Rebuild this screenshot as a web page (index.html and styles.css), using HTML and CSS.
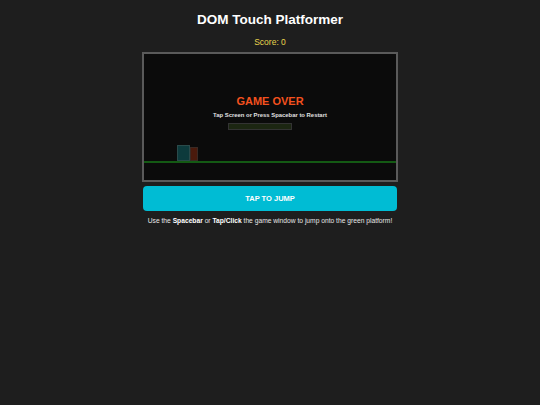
FILE: index.html
```html
<!DOCTYPE html>
<html>
<head>
<meta charset="utf-8">
<link rel="stylesheet" href="styles.css">
</head>
<body>
<div class="app">
  <h1 class="title">DOM Touch Platformer</h1>
  <div class="score">Score: 0</div>
  <div class="game">
    <div class="ground"></div>
    <div class="player"></div>
    <div class="obstacle"></div>
    <div class="overlay">
      <div class="over">GAME OVER</div>
      <div class="restart">Tap Screen or Press Spacebar to Restart</div>
      <div class="bar"></div>
    </div>
  </div>
  <button class="jump">TAP TO JUMP</button>
  <p class="help">Use the <b>Spacebar</b> or <b>Tap/Click</b> the game window to jump onto the green platform!</p>
</div>
</body>
</html>
```
FILE: styles.css
```css
html, body {
  margin: 0;
  padding: 0;
  background: #1e1e1e;
  font-family: "Liberation Sans", Arial, sans-serif;
}
.app {
  width: 256px;
  margin: 0 auto;
  padding-top: 12px;
  display: flex;
  flex-direction: column;
  align-items: center;
}
.title {
  margin: 0;
  font-size: 13.5px;
  line-height: 16px;
  font-weight: bold;
  color: #ffffff;
}
.score {
  margin-top: 9px;
  font-size: 8.5px;
  line-height: 11px;
  color: #e8d44d;
}
.game {
  position: relative;
  margin-top: 4px;
  width: 252px;
  height: 126px;
  border: 2px solid #5a5a5a;
  background: #0b0b0b;
  overflow: hidden;
}
.ground {
  position: absolute;
  left: 0;
  right: 0;
  top: 107px;
  height: 2px;
  background: #145a14;
}
.player {
  position: absolute;
  left: 33px;
  top: 91px;
  width: 13px;
  height: 16px;
  background: #0d3a3c;
  border: 1px solid #2a4a4a;
  box-sizing: border-box;
}
.obstacle {
  position: absolute;
  left: 46px;
  top: 93px;
  width: 8px;
  height: 14px;
  background: #4a1a0c;
  border: 1px solid #3a2a24;
  box-sizing: border-box;
}
.overlay {
  position: absolute;
  left: 0;
  right: 0;
  top: 41px;
  display: flex;
  flex-direction: column;
  align-items: center;
}
.over {
  font-size: 11px;
  line-height: 12px;
  font-weight: bold;
  color: #f4511e;
}
.restart {
  margin-top: 3.5px;
  font-size: 5.9px;
  line-height: 8px;
  font-weight: bold;
  color: #e0e0e0;
}
.bar {
  margin-top: 4px;
  width: 64px;
  height: 7px;
  background: #1c2612;
  border: 1px solid #333;
  box-sizing: border-box;
  align-self: flex-start;
  margin-left: 84px;
}
.jump {
  margin-top: 4px;
  width: 254px;
  height: 25px;
  border: none;
  border-radius: 4px;
  background: #00bcd4;
  color: #ffffff;
  font-family: "Liberation Sans", Arial, sans-serif;
  font-size: 7.5px;
  font-weight: bold;
  padding: 0;
}
.help {
  margin: 5px 0 0;
  width: 320px;
  text-align: center;
  font-size: 6.7px;
  line-height: 10px;
  color: #e6e6e6;
}
.help b {
  color: #ffffff;
}
```
